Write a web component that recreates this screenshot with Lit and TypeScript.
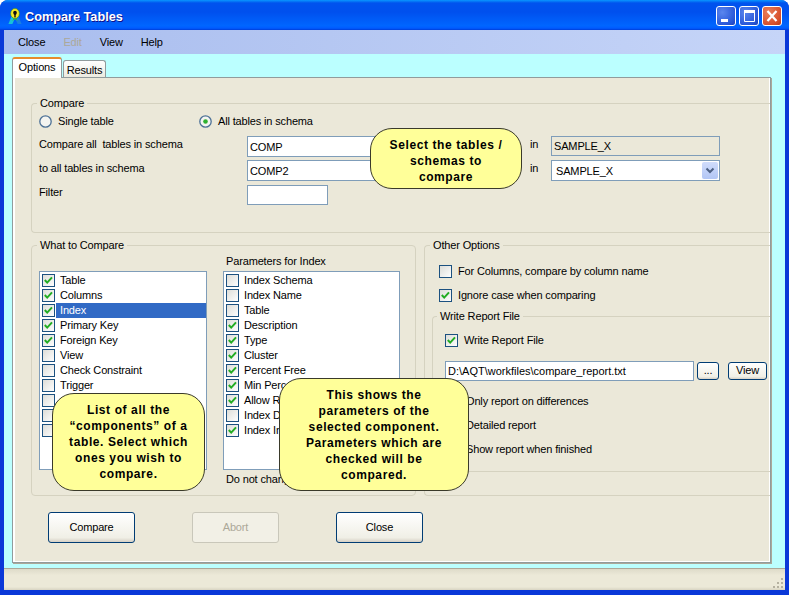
import { LitElement, css, html, svg } from 'lit'
import { customElement } from 'lit/decorators.js'

const whatItems = [
  { label: 'Table', on: true },
  { label: 'Columns', on: true },
  { label: 'Index', on: true, selected: true },
  { label: 'Primary Key', on: true },
  { label: 'Foreign Key', on: true },
  { label: 'View', on: false },
  { label: 'Check Constraint', on: false },
  { label: 'Trigger', on: false },
  { label: '', on: false },
  { label: '', on: false },
  { label: '', on: false },
]

const paramItems = [
  { label: 'Index Schema', on: false },
  { label: 'Index Name', on: false },
  { label: 'Table', on: false },
  { label: 'Description', on: true },
  { label: 'Type', on: true },
  { label: 'Cluster', on: true },
  { label: 'Percent Free', on: true },
  { label: 'Min Percent', on: true },
  { label: 'Allow Reverse', on: true },
  { label: 'Index Date', on: false },
  { label: 'Index Initial', on: true },
]

const checkMark = svg`<path d="M2.8 6 L5.2 8.6 L10 3.4" fill="none" stroke="#22ac22" stroke-width="2" />`

/**
 * Compare Tables window
 */
@customElement('app-root')
export class AppRoot extends LitElement {
  static styles = css`
    :host {
      display: block;
      width: 789px;
      height: 595px;
      background: #fff;
      font: 11px/16px 'Liberation Sans', Arial, sans-serif;
      letter-spacing: -0.15px;
      color: #000;
    }

    .window {
      position: relative;
      width: 789px;
      height: 595px;
      box-sizing: border-box;
      display: flex;
      flex-direction: column;
      padding-bottom: 5px;
      background: #0a38d8;
      border-radius: 8px 8px 0 0;
      overflow: hidden;
    }

    .title {
      height: 30px;
      flex: none;
      box-sizing: border-box;
      display: flex;
      align-items: center;
      gap: 3px;
      padding: 2px 7px 0 8px;
      background: linear-gradient(180deg, #0997ff 0, #0053ee 10%, #0050ee 40%, #0066ff 86%, #005bff 94%, #003dd7 100%);
    }

    .title-text {
      flex: 1;
      padding-top: 1px;
      color: #fff;
      font-weight: bold;
      font-size: 12.7px;
      letter-spacing: 0;
      text-shadow: 1px 1px 0 #0f1089;
    }

    .win-btn {
      width: 20px;
      height: 20px;
      flex: none;
      box-sizing: border-box;
      border: 1px solid #fff;
      border-radius: 3px;
      background: radial-gradient(circle at 30% 30%, #5a86ee, #2a58d8 70%, #1c40b8);
      display: block;
    }

    .win-btn.close {
      background: radial-gradient(circle at 30% 30%, #e8805c, #d8502c 70%, #b83c18);
    }

    .client-wrap {
      flex: 1;
      display: flex;
      flex-direction: column;
      margin: 0 4px;
      min-height: 0;
    }

    .menu {
      height: 24px;
      flex: none;
      display: flex;
      align-items: center;
      gap: 18px;
      padding-left: 14px;
      background: linear-gradient(90deg, #a9bdee, #c6d5f8);
    }

    .menu .off {
      color: #aca899;
    }

    .client {
      flex: 1;
      min-height: 0;
      box-sizing: border-box;
      padding: 3px 14px 5px 8px;
      background: #bbffff;
      display: flex;
      flex-direction: column;
    }

    .tabs {
      display: flex;
      align-items: flex-end;
      height: 20px;
      flex: none;
      position: relative;
      z-index: 1;
    }

    .tab {
      box-sizing: border-box;
      height: 17px;
      width: 43px;
      padding-top: 1px;
      text-align: center;
      background: linear-gradient(180deg, #fff, #ecebe0);
      border: 1px solid #919b9c;
      border-bottom: none;
      border-radius: 3px 3px 0 0;
      margin-left: 1px;
    }

    .tab.active {
      height: 21px;
      width: 50px;
      margin: 0 0 -1px;
      padding-top: 0;
      background: #fff;
      border-top: 2px solid #e68b2c;
    }

    .page {
      flex: 1;
      min-height: 0;
      box-sizing: border-box;
      border: 1px solid #919b9c;
      padding: 18px 0 0 18px;
      background: #ebe8d9;
      box-shadow: inset 2px 0 0 #fff, inset -1px -1px 0 #fff, 1px 1px 0 #aca899;
    }

    fieldset {
      margin: 0;
      min-width: 0;
      border: 1px solid #d5d2c0;
      border-right: none;
      border-radius: 4px 0 0 4px;
    }

    legend {
      padding: 0 3px;
      margin-left: -2px;
      line-height: 14px;
    }

    .compare {
      height: 137px;
      box-sizing: border-box;
      padding: 4px 0 0 7px;
    }

    .radios {
      display: flex;
      height: 14px;
      margin-bottom: 8px;
    }

    .radio-item {
      width: 160px;
      display: flex;
      align-items: center;
      gap: 6px;
    }

    .radio {
      width: 13px;
      height: 13px;
      flex: none;
      display: block;
    }

    .form {
      display: grid;
      grid-template-columns: 208px 143px 140px 21px 169px;
      grid-template-rows: 21px 21px 20px;
      row-gap: 3px;
    }

    .form .in {
      grid-column: 4;
    }

    .form .wide {
      grid-column: 2;
    }

    .spaced {
      white-space: pre;
    }

    .field {
      box-sizing: border-box;
      height: 20px;
      border: 1px solid #7f9db9;
      background: #fff;
      padding: 1px 2px;
      line-height: 16px;
    }

    .field.readonly {
      background: #ebe8d9;
    }

    .field.tall {
      height: 21px;
      padding-top: 2px;
    }

    .field.filter {
      width: 81px;
      margin-top: 1px;
    }

    .combo {
      display: flex;
      justify-content: space-between;
      padding: 3px 1px 0 4px;
    }

    .combo-btn {
      width: 16px;
      height: 17px;
      margin-top: -1px;
      border-radius: 2px;
      background: linear-gradient(180deg, #d0dcfb, #b2c6f5);
      display: block;
    }

    .bottom {
      display: flex;
      gap: 8px;
      margin-top: 5px;
      height: 258px;
    }

    .what {
      width: 385px;
      box-sizing: border-box;
      flex: none;
      border-right: 1px solid #d5d2c0;
      border-radius: 4px;
      padding: 2px 0 0 7px;
      display: grid;
      grid-template-columns: 168px 177px;
      grid-template-rows: 17px 199px auto;
      column-gap: 16px;
    }

    .params-title {
      grid-column: 2;
      grid-row: 1;
      padding-left: 3px;
      line-height: 14px;
    }

    .list {
      box-sizing: border-box;
      border: 1px solid #7f9db9;
      background: #fff;
      padding: 1px 0 0 2px;
      grid-row: 2;
    }

    .list.first {
      grid-column: 1;
    }

    .list.second {
      grid-column: 2;
    }

    .list-row {
      height: 15px;
      display: flex;
      align-items: center;
    }

    .list-row .text {
      flex: 1;
      height: 15px;
      margin-left: 1px;
      padding-left: 4px;
      line-height: 15px;
    }

    .list-row.selected .text {
      background: #316ac5;
      color: #fff;
    }

    .note {
      grid-column: 2;
      grid-row: 3;
      padding: 1px 0 0 3px;
    }

    .check {
      width: 13px;
      height: 13px;
      flex: none;
      display: block;
    }

    .other {
      flex: 1;
      min-width: 0;
      box-sizing: border-box;
      padding: 11px 0 0 7px;
    }

    .opt {
      display: flex;
      align-items: center;
      gap: 6px;
      height: 16px;
    }

    .other > .opt {
      margin: 0 0 8px 7px;
    }

    .report {
      height: 163px;
      box-sizing: border-box;
      margin-top: -2px;
      padding: 9px 0 0 12px;
    }

    .report legend {
      margin-left: -8px;
    }

    .file-row {
      display: flex;
      align-items: center;
      gap: 3px;
      margin: 13px 0 12px;
    }

    .file-row .field {
      width: 249px;
      letter-spacing: 0;
    }

    .small-btn {
      box-sizing: border-box;
      width: 22px;
      height: 18px;
      line-height: 15px;
      text-align: center;
      border: 1px solid #003c74;
      border-radius: 3px;
      background: linear-gradient(180deg, #fff, #f0efe6 85%, #d6d0c5);
    }

    .small-btn.view {
      width: 39px;
      margin-left: 6px;
    }

    .plain {
      height: 16px;
      padding-left: 21px;
      margin-bottom: 8px;
    }

    .actions {
      display: flex;
      gap: 57px;
      margin: 16px 0 0 17px;
    }

    .action {
      box-sizing: border-box;
      width: 87px;
      height: 31px;
      line-height: 29px;
      text-align: center;
      border: 1px solid #003c74;
      border-radius: 3px;
      background: linear-gradient(180deg, #fff, #f0efe6 85%, #d6d0c5);
    }

    .action.off {
      color: #aca899;
      border-color: #c9c7ba;
      background: #f2f0e6;
    }

    .status {
      height: 21px;
      flex: none;
      display: flex;
      justify-content: flex-end;
      align-items: flex-end;
      border-top: 1px solid #aca899;
      background: linear-gradient(180deg, #dedbc9, #ece9d8 30%, #ece9d8 85%, #d8d4c2);
    }

    .callout {
      position: absolute;
      box-sizing: border-box;
      background: #ffff99;
      border: 1px solid #3a3a2a;
      border-radius: 22px;
      font-size: 12px;
      font-weight: bold;
      letter-spacing: 0.6px;
      text-align: center;
    }

    .c1 {
      left: 370px;
      top: 128px;
      width: 152px;
      height: 61px;
      padding-top: 8px;
    }

    .c2 {
      left: 52px;
      top: 393px;
      width: 153px;
      height: 98px;
      padding-top: 8px;
    }

    .c3 {
      left: 279px;
      top: 378px;
      width: 190px;
      height: 113px;
      padding-top: 8px;
    }
  `

  private renderCheck(on: boolean) {
    return html`<svg class="check" viewBox="0 0 13 13">
      <defs>
        <linearGradient id="box" x1="0" y1="0" x2="1" y2="1">
          <stop offset="0" stop-color="#dcdcd7" />
          <stop offset="1" stop-color="#fff" />
        </linearGradient>
      </defs>
      <rect x="0.5" y="0.5" width="12" height="12" fill="url(#box)" stroke="#1c5180" />
      ${on ? checkMark : ''}
    </svg>`
  }

  private renderRadio(on: boolean) {
    return html`<svg class="radio" viewBox="0 0 13 13">
      <circle cx="6.5" cy="6.5" r="5.7" fill="#f4f4f0" stroke="#4d7196" stroke-width="1.3" />
      ${on ? svg`<circle cx="6.5" cy="6.5" r="2.3" fill="#2fb02f" />` : ''}
    </svg>`
  }

  private renderRow(item: { label: string; on: boolean; selected?: boolean }) {
    return html`<div class="list-row ${item.selected ? 'selected' : ''}">
      ${this.renderCheck(item.on)}
      <span class="text">${item.label}</span>
    </div>`
  }

  render() {
    return html`
      <div class="window">
        <div class="title">
          <svg width="14" height="17" viewBox="0 0 16 17" preserveAspectRatio="none">
            <path d="M5 6 L0.5 16 L5 16 L8 10 Z" fill="#19c2d8" />
            <path d="M11 6 L15.5 16 L11 16 L8 10 Z" fill="#1a7fe0" />
            <path d="M5 13 L8 7 L11 13 L8 11 Z" fill="#30c030" />
            <circle cx="8" cy="5.5" r="5" fill="#f6e826" stroke="#2f8f20" stroke-width="0.6" />
            <circle cx="8" cy="4.8" r="2.1" fill="#111" />
            <rect x="7.2" y="5" width="1.6" height="4.4" fill="#111" />
          </svg>
          <span class="title-text">Compare Tables</span>
          <svg class="win-btn" viewBox="0 0 18 18">
            <rect x="4" y="12" width="7" height="3" fill="#fff" />
          </svg>
          <svg class="win-btn" viewBox="0 0 18 18">
            <path d="M4.5 3.5 H14.5 V14.5 H4.5 Z M4.5 5 H14.5" fill="none" stroke="#fff" stroke-width="1" />
            <rect x="4" y="3" width="11" height="3" fill="#fff" />
          </svg>
          <svg class="win-btn close" viewBox="0 0 18 18">
            <path d="M4.5 4 L13.5 14 M13.5 4 L4.5 14" stroke="#fff" stroke-width="2.2" />
          </svg>
        </div>
        <div class="client-wrap">
          <div class="menu">
            <span>Close</span>
            <span class="off">Edit</span>
            <span>View</span>
            <span>Help</span>
          </div>
          <div class="client">
            <div class="tabs">
              <div class="tab active">Options</div>
              <div class="tab">Results</div>
            </div>
            <div class="page">
              <fieldset class="compare">
                <legend>Compare</legend>
                <div class="radios">
                  <label class="radio-item">${this.renderRadio(false)}Single table</label>
                  <label class="radio-item">${this.renderRadio(true)}All tables in schema</label>
                </div>
                <div class="form">
                  <span class="spaced">Compare all  tables in schema</span>
                  <div class="field tall">COMP</div>
                  <span></span>
                  <span class="in">in</span>
                  <div class="field readonly">SAMPLE_X</div>
                  <span>to all tables in schema</span>
                  <div class="field tall">COMP2</div>
                  <span></span>
                  <span class="in">in</span>
                  <div class="field tall combo">
                    SAMPLE_X
                    <svg class="combo-btn" viewBox="0 0 16 17">
                      <path d="M4.5 6.5 L8 10 L11.5 6.5" fill="none" stroke="#4d6185" stroke-width="2" />
                    </svg>
                  </div>
                  <span>Filter</span>
                  <div class="wide"><div class="field filter"></div></div>
                </div>
              </fieldset>
              <div class="bottom">
                <fieldset class="what">
                  <legend>What to Compare</legend>
                  <div class="params-title">Parameters for Index</div>
                  <div class="list first">${whatItems.map((i) => this.renderRow(i))}</div>
                  <div class="list second">${paramItems.map((i) => this.renderRow(i))}</div>
                  <div class="note">Do not change</div>
                </fieldset>
                <fieldset class="other">
                  <legend>Other Options</legend>
                  <div class="opt">${this.renderCheck(false)}For Columns, compare by column name</div>
                  <div class="opt">${this.renderCheck(true)}Ignore case when comparing</div>
                  <fieldset class="report">
                    <legend>Write Report File</legend>
                    <div class="opt">${this.renderCheck(true)}Write Report File</div>
                    <div class="file-row">
                      <div class="field">D:\\AQT\\workfiles\\compare_report.txt</div>
                      <div class="small-btn">...</div>
                      <div class="small-btn view">View</div>
                    </div>
                    <div class="plain">Only report on differences</div>
                    <div class="plain">Detailed report</div>
                    <div class="plain">Show report when finished</div>
                  </fieldset>
                </fieldset>
              </div>
              <div class="actions">
                <div class="action">Compare</div>
                <div class="action off">Abort</div>
                <div class="action">Close</div>
              </div>
            </div>
          </div>
          <div class="status">
            <svg width="13" height="13" viewBox="0 0 13 13">
              <path d="M9 1h2v2H9z M5 5h2v2H5z M9 5h2v2H9z M1 9h2v2H1z M5 9h2v2H5z M9 9h2v2H9z" fill="#b5b1a0" />
            </svg>
          </div>
        </div>
        <div class="callout c1">Select the tables /<br />schemas to<br />compare</div>
        <div class="callout c2">List of all the<br />“components” of a<br />table. Select which<br />ones you wish to<br />compare.</div>
        <div class="callout c3">This shows the<br />parameters of the<br />selected component.<br />Parameters which are<br />checked will be<br />compared.</div>
      </div>
    `
  }
}
